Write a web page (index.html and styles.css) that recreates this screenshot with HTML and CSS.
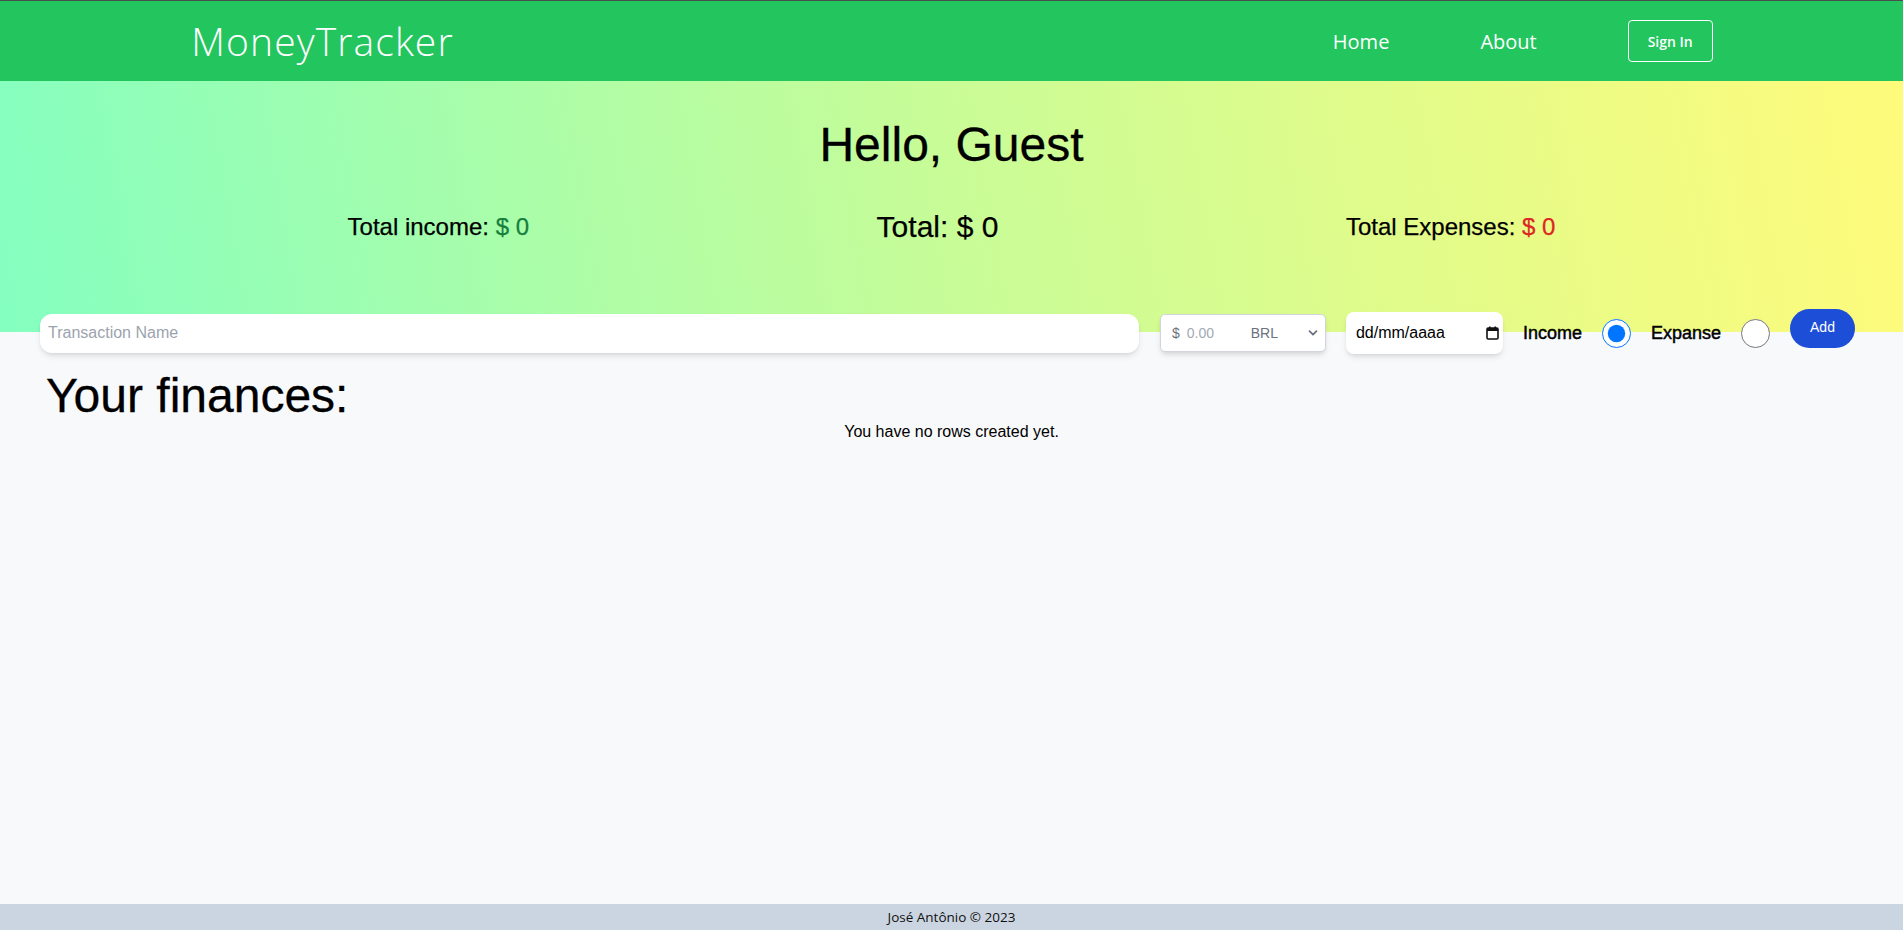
FILE: index.html
```html
<!DOCTYPE html>
<html lang="pt-BR">
<head>
<meta charset="utf-8">
<title>MoneyTracker</title>
<link rel="stylesheet" href="styles.css">
</head>
<body>
<header class="navbar">
  <div class="nav-inner">
    <a class="logo" href="#">MoneyTracker</a>
    <nav class="nav-links">
      <a href="#" class="nav-link">Home</a>
      <a href="#" class="nav-link">About</a>
      <button type="button" class="signin">Sign In</button>
    </nav>
  </div>
</header>
<section class="hero">
  <h1 class="greeting">Hello, Guest</h1>
  <div class="totals">
    <p class="total-item">Total income: <span class="income">$ 0</span></p>
    <p class="total-main">Total: $ 0</p>
    <p class="total-item">Total Expenses: <span class="expense">$ 0</span></p>
  </div>
  <form class="tx-form">
    <input class="tx-name" type="text" placeholder="Transaction Name">
    <div class="amount">
      <span class="currency-sign">$</span>
      <input class="amount-input" type="text" placeholder="0.00">
      <div class="currency-select">
        <span>BRL</span>
        <svg class="chevron" width="10" height="10" viewBox="0 0 10 10"><path d="M1.5 3.2 L5 6.7 L8.5 3.2" fill="none" stroke="#6b7280" stroke-width="1.8" stroke-linecap="round" stroke-linejoin="round"/></svg>
      </div>
    </div>
    <div class="date-field">
      <span class="date-text">dd/mm/aaaa</span>
      <svg class="cal" width="13" height="14" viewBox="0 0 13 14"><rect x="1" y="2" width="11" height="11" rx="1.2" fill="none" stroke="#111" stroke-width="1.6"/><rect x="1" y="2" width="11" height="3" fill="#111"/><rect x="3" y="0.5" width="1.6" height="2.5" fill="#111"/><rect x="8.4" y="0.5" width="1.6" height="2.5" fill="#111"/></svg>
    </div>
    <label class="type-label" for="t-income">Income</label>
    <input class="radio" type="radio" id="t-income" name="type" checked>
    <label class="type-label" for="t-expense">Expanse</label>
    <input class="radio" type="radio" id="t-expense" name="type">
    <button type="button" class="add-btn">Add</button>
  </form>
</section>
<main class="content">
  <h1 class="section-title">Your finances:</h1>
  <p class="empty">You have no rows created yet.</p>
</main>
<footer class="footer">José Antônio © 2023</footer>
</body>
</html>
```

FILE: styles.css
```css
* { box-sizing: border-box; }

html, body { height: 100%; }

body {
  margin: 0;
  min-height: 100vh;
  display: flex;
  flex-direction: column;
  background: #f8f9fb;
  font-family: "Liberation Sans", Arial, sans-serif;
  color: #000;
}

.navbar {
  background: #22c55e;
  border-top: 1px solid #4a4f4c;
  height: 81px;
  flex: none;
}

.nav-inner {
  width: 80%;
  margin: 0 auto;
  height: 100%;
  display: flex;
  align-items: center;
  justify-content: space-between;
}

.logo {
  font-family: "Open Sans", sans-serif;
  font-weight: 300;
  font-size: 39px;
  color: #fff;
  text-decoration: none;
  letter-spacing: 1.1px;
  margin-top: -2px;
  margin-left: 1px;
}

.nav-links {
  display: flex;
  align-items: center;
}

.nav-link {
  font-family: "Open Sans", sans-serif;
  font-size: 20px;
  color: #fff;
  text-decoration: none;
  margin-right: 91px;
}

.signin {
  background: transparent;
  border: 1px solid #fff;
  border-radius: 4px;
  color: #fff;
  font-family: "Open Sans", sans-serif;
  font-weight: 600;
  font-size: 14px;
  width: 85px;
  height: 42px;
  padding: 0;
}

.hero {
  flex: none;
  background: linear-gradient(80deg, #84ffc0 0%, #c8fc97 50%, #fffb7b 100%);
  padding-top: 36px;
}

.greeting {
  margin: 0;
  text-align: center;
  font-size: 48px;
  font-weight: 400;
  line-height: normal;
  -webkit-text-stroke: 0.3px #000;
}

.totals {
  margin-top: 38px;
  display: flex;
  justify-content: space-evenly;
  align-items: center;
  -webkit-text-stroke: 0.25px currentColor;
}

.total-item {
  margin: 0;
  font-size: 24px;
}

.total-main {
  margin: 0;
  font-size: 30px;
}

.income { color: #15803d; }
.expense { color: #dc2626; }

.tx-form {
  margin-top: 68px;
  margin-bottom: -22px;
  padding: 0 48px 0 40px;
  display: flex;
  align-items: center;
  gap: 20px;
  height: 42px;
}

.tx-name {
  flex: 1;
  height: 39px;
  border: none;
  border-radius: 12px;
  background: #fff;
  padding: 0 8px;
  font-family: "Liberation Sans", Arial, sans-serif;
  font-size: 16px;
  box-shadow: 0 4px 6px -1px rgba(0,0,0,.1), 0 2px 4px -2px rgba(0,0,0,.1);
  margin-right: 1px;
}

.tx-name::placeholder { color: #9ca3af; }

.amount {
  width: 166px;
  height: 38px;
  background: #fff;
  border: 1px solid #d1d5db;
  border-radius: 5px;
  box-shadow: 0 4px 6px -1px rgba(0,0,0,.1), 0 2px 4px -2px rgba(0,0,0,.1);
  display: flex;
  align-items: center;
  padding: 0 7px 0 11px;
  font-size: 14px;
}

.currency-sign { color: #6b7280; }

.amount-input {
  width: 54px;
  border: none;
  padding: 0;
  margin-left: 7px;
  font-family: "Liberation Sans", Arial, sans-serif;
  font-size: 14px;
  background: transparent;
}

.amount-input::placeholder { color: #a3a9b3; }

.currency-select {
  flex: 1;
  display: flex;
  align-items: center;
  justify-content: space-between;
  color: #6b7280;
  padding-left: 10px;
}

.chevron { display: block; }

.date-field {
  width: 157px;
  height: 42px;
  background: #fff;
  border-radius: 8px;
  box-shadow: 0 4px 6px -1px rgba(0,0,0,.1), 0 2px 4px -2px rgba(0,0,0,.1);
  display: flex;
  align-items: center;
  justify-content: space-between;
  padding: 0 4px 0 10px;
  font-size: 16px;
}

.cal { display: block; }

.type-label {
  font-size: 18px;
  font-weight: 500;
  -webkit-text-stroke: 0.45px #000;
}

.radio {
  width: 29px;
  height: 29px;
  margin: 0;
}

.add-btn {
  width: 65px;
  height: 39px;
  border: none;
  border-radius: 999px;
  background: #1d4ed8;
  color: #fff;
  font-family: "Liberation Sans", Arial, sans-serif;
  font-size: 14px;
  padding: 0 0 3px;
  margin-bottom: 9px;
}

.content {
  flex: 1;
  padding: 36px 46px 0;
}

.section-title {
  margin: 0;
  font-size: 48px;
  font-weight: 400;
  line-height: normal;
  -webkit-text-stroke: 0.3px #000;
}

.empty {
  margin: 0;
  text-align: center;
  font-size: 16px;
}

.footer {
  flex: none;
  height: 26px;
  background: #cbd5e1;
  display: flex;
  align-items: center;
  justify-content: center;
  font-family: "Open Sans", sans-serif;
  font-size: 13.5px;
  color: #111;
}
```
